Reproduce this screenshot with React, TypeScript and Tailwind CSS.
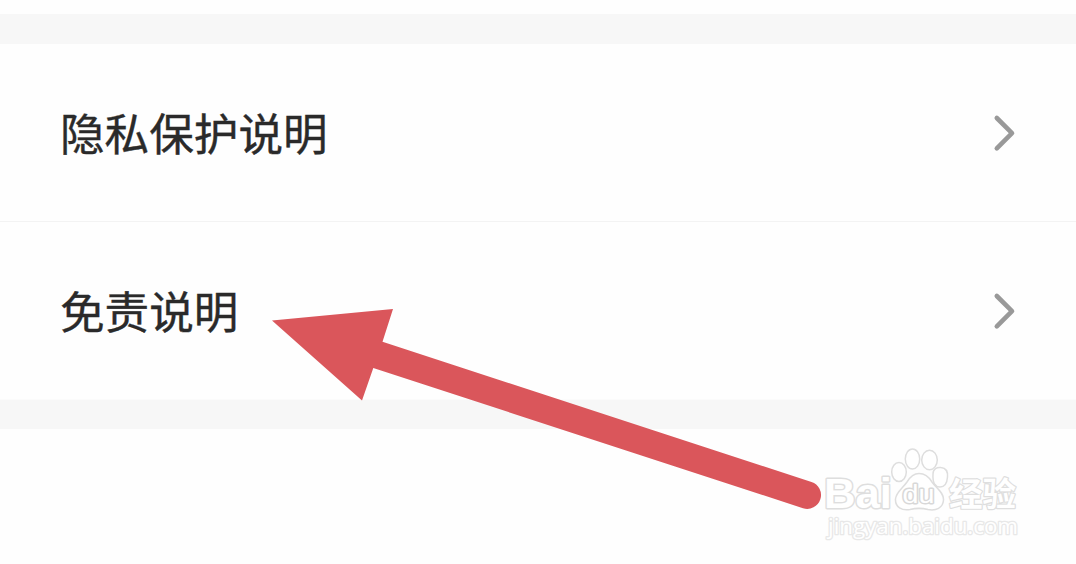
const items = ["隐私保护说明", "免责说明"];

function Chevron() {
  return (
    <svg width="24" height="40" viewBox="0 0 24 40" fill="none" className="shrink-0">
      <path d="M4.8 5 L20 20.2 L4.8 35.4" stroke="#999999" strokeWidth="4.6" strokeLinecap="round" strokeLinejoin="round" />
    </svg>
  );
}

function Row({ label }: { label: string }) {
  return (
    <div className="flex h-[178px] items-center justify-between border-b border-[#f3f3f3] pl-[60px] pr-[60px] last:border-[#fbfbfb]">
      <span className="pb-px text-[44.6px] leading-[60px] text-[#2a2a2a] whitespace-nowrap [-webkit-text-stroke:0.4px_#2a2a2a]">{label}</span>
      <Chevron />
    </div>
  );
}

function Pointer() {
  return (
    <svg width="560" height="210" viewBox="268 304 560 210" className="absolute left-[268px] top-[304px]">
      <path
        d="M272 320.5 L393 309 L382.5 341.8 L811.5 482 A13.7 13.7 0 0 1 803 508.2 L373.3 368 L362 400.5 Z"
        fill="#da565b"
      />
    </svg>
  );
}

function Watermark() {
  return (
    <svg
      width="210"
      height="104"
      viewBox="816 442 210 104"
      className="absolute left-[816px] top-[442px]"
      fill="#ffffff"
      stroke="#dedede"
      strokeWidth="1.5"
      strokeLinejoin="round"
    >
      <g style={{ paintOrder: "stroke" }}>
        <text x="824" y="508" fontSize="43" fontWeight="700" textLength="68" lengthAdjust="spacingAndGlyphs" strokeWidth="3" className="font-['Liberation_Sans',sans-serif]">
          Bai
        </text>
        <text x="949" y="505.5" fontSize="33" fontWeight="700" textLength="67" lengthAdjust="spacingAndGlyphs" strokeWidth="2.4" className="font-['Noto_Sans_CJK_SC',sans-serif]">
          经验
        </text>
        <text x="828" y="533.5" fontSize="21.5" textLength="190" lengthAdjust="spacingAndGlyphs" strokeWidth="2.6" stroke="#e8e8e8" className="font-['Open_Sans',sans-serif]">
          jingyan.baidu.com
        </text>
      </g>
      <ellipse cx="899" cy="472" rx="7.3" ry="9.5" />
      <ellipse cx="912.5" cy="459" rx="7.2" ry="10" />
      <ellipse cx="929.5" cy="460" rx="7.8" ry="9.7" />
      <path d="M933 474 C933 469 937 467 941 467.5 C946 468 948 472 947.5 477 C947 484 944 487 940 487 C935 487 932.5 483 933 474 Z" />
      <path d="M919 473.5 C925 473.5 929 477 932 482 C936 488 944 492 943.5 500 C943 508 936 511 928 509.5 C922 508 916 508 910 509.5 C902 511 895 507 895.5 499 C896 492 903 488 907 482 C910 477 913 473.5 919 473.5 Z" />
      <text x="902.5" y="502.5" fontSize="25" fontWeight="400" textLength="32" lengthAdjust="spacingAndGlyphs" strokeWidth="2.8" stroke="#d8d8d8" style={{ paintOrder: "stroke" }} className="font-['Liberation_Sans',sans-serif]">
        du
      </text>
    </svg>
  );
}

export default function App() {
  return (
    <div className="relative h-[564px] w-[1076px] overflow-hidden bg-[#fefefe] pt-3.5 font-['Noto_Sans_CJK_SC',sans-serif]">
      <div className="h-[30px] bg-[#f7f7f7]" />
      <div>
        {items.map((label) => (
          <Row key={label} label={label} />
        ))}
      </div>
      <div className="h-[29px] bg-[#f7f7f7]" />
      <Watermark />
      <Pointer />
    </div>
  );
}
